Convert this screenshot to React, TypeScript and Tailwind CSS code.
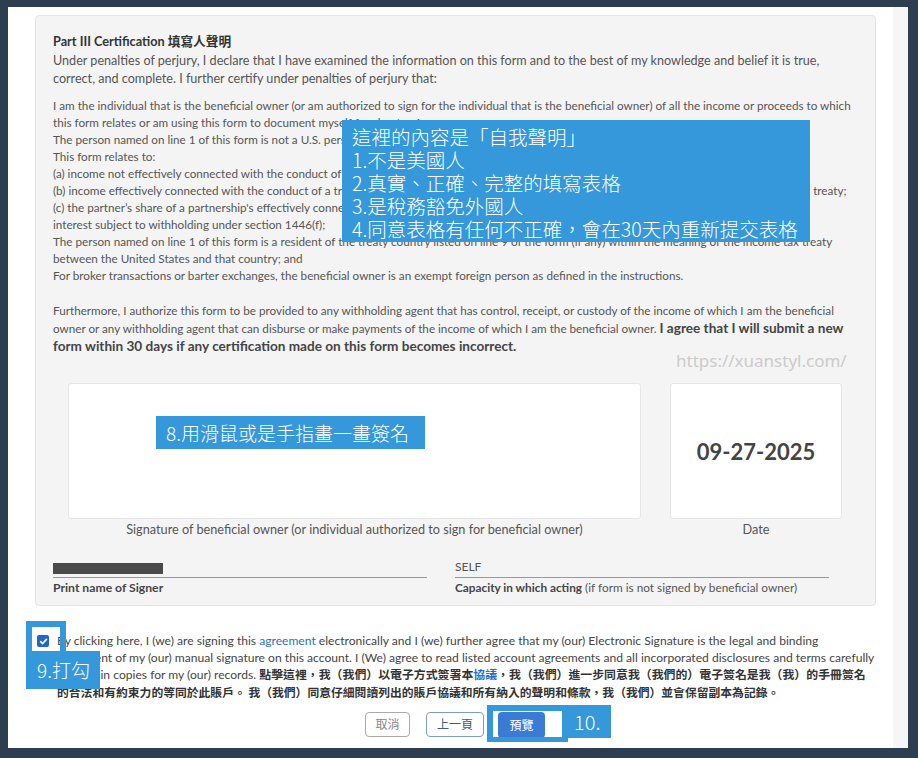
export default function App() {
  const cjk = "font-['Noto_Sans_CJK_TC',sans-serif]";
  return (
    <div className="w-[918px] h-[758px] bg-[#2c3e50] pt-[7px] pl-[8px] pr-[10px] pb-[10px] font-['Lato','Noto_Sans_CJK_TC',sans-serif] text-[#555]">
      <div className="relative flex h-full bg-white">
        <div className="flex-1 flex flex-col">
          {/* Panel */}
          <div className="mt-[8px] ml-[27px] mr-[17px] rounded-[4px] border border-[#e4e4e4] bg-[#f4f4f4] px-[17px] pt-[15px] pb-[9px]">
            <div className="text-[12.7px] leading-[20px] font-bold text-[#333]">Part III Certification 填寫人聲明</div>
            <div className="mt-[1px] text-[12.6px] leading-[18px] whitespace-nowrap">
              Under penalties of perjury, I declare that I have examined the information on this form and to the best of my knowledge and belief it is true,<br />
              correct, and complete. I further certify under penalties of perjury that:
            </div>
            <div className="mt-[9px] text-[11.7px] leading-[17px] whitespace-nowrap">
              I am the individual that is the beneficial owner (or am authorized to sign for the individual that is the beneficial owner) of all the income or proceeds to which<br />
              this form relates or am using this form to document myself for chapter 4 purposes;<br />
              The person named on line 1 of this form is not a U.S. person;<br />
              This form relates to:<br />
              (a) income not effectively connected with the conduct of a trade or business in the United States;<br />
              (b) income effectively connected with the conduct of a trade or business in the United States but is not subject to tax under an applicable income tax treaty;<br />
              (c) the partner’s share of a partnership's effectively connected taxable income; or (d) the partner’s amount realized from the transfer of a partnership<br />
              interest subject to withholding under section 1446(f);<br />
              The person named on line 1 of this form is a resident of the treaty country listed on line 9 of the form (if any) within the meaning of the income tax treaty<br />
              between the United States and that country; and<br />
              For broker transactions or barter exchanges, the beneficial owner is an exempt foreign person as defined in the instructions.
            </div>
            <div className="mt-[17px] text-[11.7px] leading-[18px] whitespace-nowrap">
              Furthermore, I authorize this form to be provided to any withholding agent that has control, receipt, or custody of the income of which I am the beneficial<br />
              owner or any withholding agent that can disburse or make payments of the income of which I am the beneficial owner.{" "}
              <b className="text-[13.6px] text-[#444]">I agree that I will submit a new</b><br />
              <b className="text-[13.6px] text-[#444]">form within 30 days if any certification made on this form becomes incorrect.</b>
            </div>

            {/* Signature + date */}
            <div className="mt-[28px] flex pl-[15px]">
              <div className="w-[573px] flex flex-col items-center">
                <div className="w-full h-[136px] bg-white border border-[#e6e6e6] rounded-[3px]" />
                <div className="mt-[1px] text-[12.7px] leading-[18px]">Signature of beneficial owner (or individual authorized to sign for beneficial owner)</div>
              </div>
              <div className="ml-[29px] w-[172px] flex flex-col items-center">
                <div className="w-full h-[136px] bg-white border border-[#e6e6e6] rounded-[3px] flex items-center justify-center">
                  <span className="text-[22px] font-bold text-[#444]">09-27-2025</span>
                </div>
                <div className="mt-[1px] text-[12.7px] leading-[18px]">Date</div>
              </div>
            </div>

            {/* Print name / capacity */}
            <div className="flex">
              <div className="w-[374px]">
                <div className="h-[40px] flex items-end border-b border-[#999]">
                  <div className="mb-[3px] w-[110px] h-[11px] bg-[#4a4a4a]" />
                </div>
                <div className="mt-[2px] text-[12.2px] leading-[16px] font-bold text-[#444]">Print name of Signer</div>
              </div>
              <div className="ml-[28px] w-[374px]">
                <div className="h-[40px] flex items-end border-b border-[#999] pb-[2px]">
                  <span className="text-[12px] leading-[16px]">SELF</span>
                </div>
                <div className="mt-[2px] text-[11.8px] leading-[16px]">
                  <b className="text-[#444]">Capacity in which acting</b> (if form is not signed by beneficial owner)
                </div>
              </div>
            </div>
          </div>

          {/* Agreement */}
          <div className="mt-[27px] ml-[29px] flex items-start">
            <div className="mt-[2px] w-[12px] h-[12px] rounded-[2px] bg-[#2467c9] flex items-center justify-center shrink-0">
              <svg width="9" height="9" viewBox="0 0 10 10"><path d="M1.8 5.2 L4 7.3 L8.3 2.6" stroke="white" strokeWidth="1.8" fill="none" strokeLinecap="round" strokeLinejoin="round" /></svg>
            </div>
            <div className="ml-[8px] text-[12.1px] leading-[16.7px] whitespace-nowrap text-[#444]">
              By clicking here, I (we) are signing this <span className="text-[#2a6fc0]">agreement</span> electronically and I (we) further agree that my (our) Electronic Signature is the legal and binding<br />
              equivalent of my (our) manual signature on this account. I (We) agree to read listed account agreements and all incorporated disclosures and terms carefully<br />
              and retain copies for my (our) records. <span className={`text-[11.9px] font-bold text-[#333] ${cjk}`}>點擊這裡，我（我們）以電子方式簽署本<span className="text-[#2a6fc0]">協議</span>，我（我們）進一步同意我（我們的）電子簽名是我（我）的手冊簽名</span><br />
              <span className={`text-[11.8px] font-bold text-[#333] ${cjk}`}>的合法和有約束力的等同於此賬戶。 我（我們）同意仔細閱讀列出的賬戶協議和所有納入的聲明和條款，我（我們）並會保留副本為記錄。</span>
            </div>
          </div>

          {/* Buttons */}
          <div className={`mt-[10px] flex justify-center pl-[9px] text-[12px] ${cjk}`}>
            <div className="w-[45px] h-[25px] flex items-center justify-center border border-[#aaa] rounded-[4px] text-[#888]">取消</div>
            <div className="ml-[16px] w-[58px] h-[25px] flex items-center justify-center border border-[#7f9cc4] rounded-[4px] text-[#3d5a88]">上一頁</div>
            <div className="ml-[14px] w-[47px] h-[26px] flex items-center justify-center rounded-[4px] bg-[#3b7bd4] text-white">預覽</div>
          </div>
        </div>
        <div className="w-[15px] bg-[#f6f6f6]" />

        {/* Watermark */}
        <div className="absolute left-[668px] top-[343px] text-[17px] leading-[22px] text-[#cbcbcb] font-['Noto_Sans',sans-serif]">https://xuanstyl.com/</div>

        {/* Annotation 1 */}
        <div lang="zh-TW" className={`absolute left-[334px] top-[113px] w-[468px] h-[122px] bg-[#3498db] text-white text-[19.5px] leading-[23px] font-light pl-[10px] pt-[5px] ${cjk}`}>
          這裡的內容是「自我聲明」<br />
          1.不是美國人<br />
          2.真實、正確、完整的填寫表格<br />
          3.是稅務豁免外國人<br />
          4.同意表格有任何不正確，會在30天內重新提交表格
        </div>

        {/* Annotation 8 */}
        <div lang="zh-TW" className={`absolute left-[148px] top-[409px] w-[269px] h-[33px] bg-[#3498db] text-white text-[19px] leading-[33px] font-light pl-[10px] ${cjk}`}>
          8.用滑鼠或是手指畫一畫簽名
        </div>

        {/* Annotation 9 */}
        <div className="absolute left-[18px] top-[614px] w-[40px] h-[36px] border-[6px] border-[#3498db]" />
        <div lang="zh-TW" className={`absolute left-[18px] top-[644px] w-[74px] h-[38px] bg-[#3498db] text-white text-[19px] leading-[38px] font-light pl-[11px] ${cjk}`}>
          9.打勾
        </div>

        {/* Annotation 10 */}
        <div className="absolute left-[479px] top-[698px] w-[81px] h-[37px] border-[6px] border-b-[5px] border-[#3498db]" />
        <div className={`absolute left-[560px] top-[698px] w-[43px] h-[33px] bg-[#3498db] text-white text-[20px] leading-[33px] font-light pl-[6px] ${cjk}`}>
          10.
        </div>
      </div>
    </div>
  );
}
